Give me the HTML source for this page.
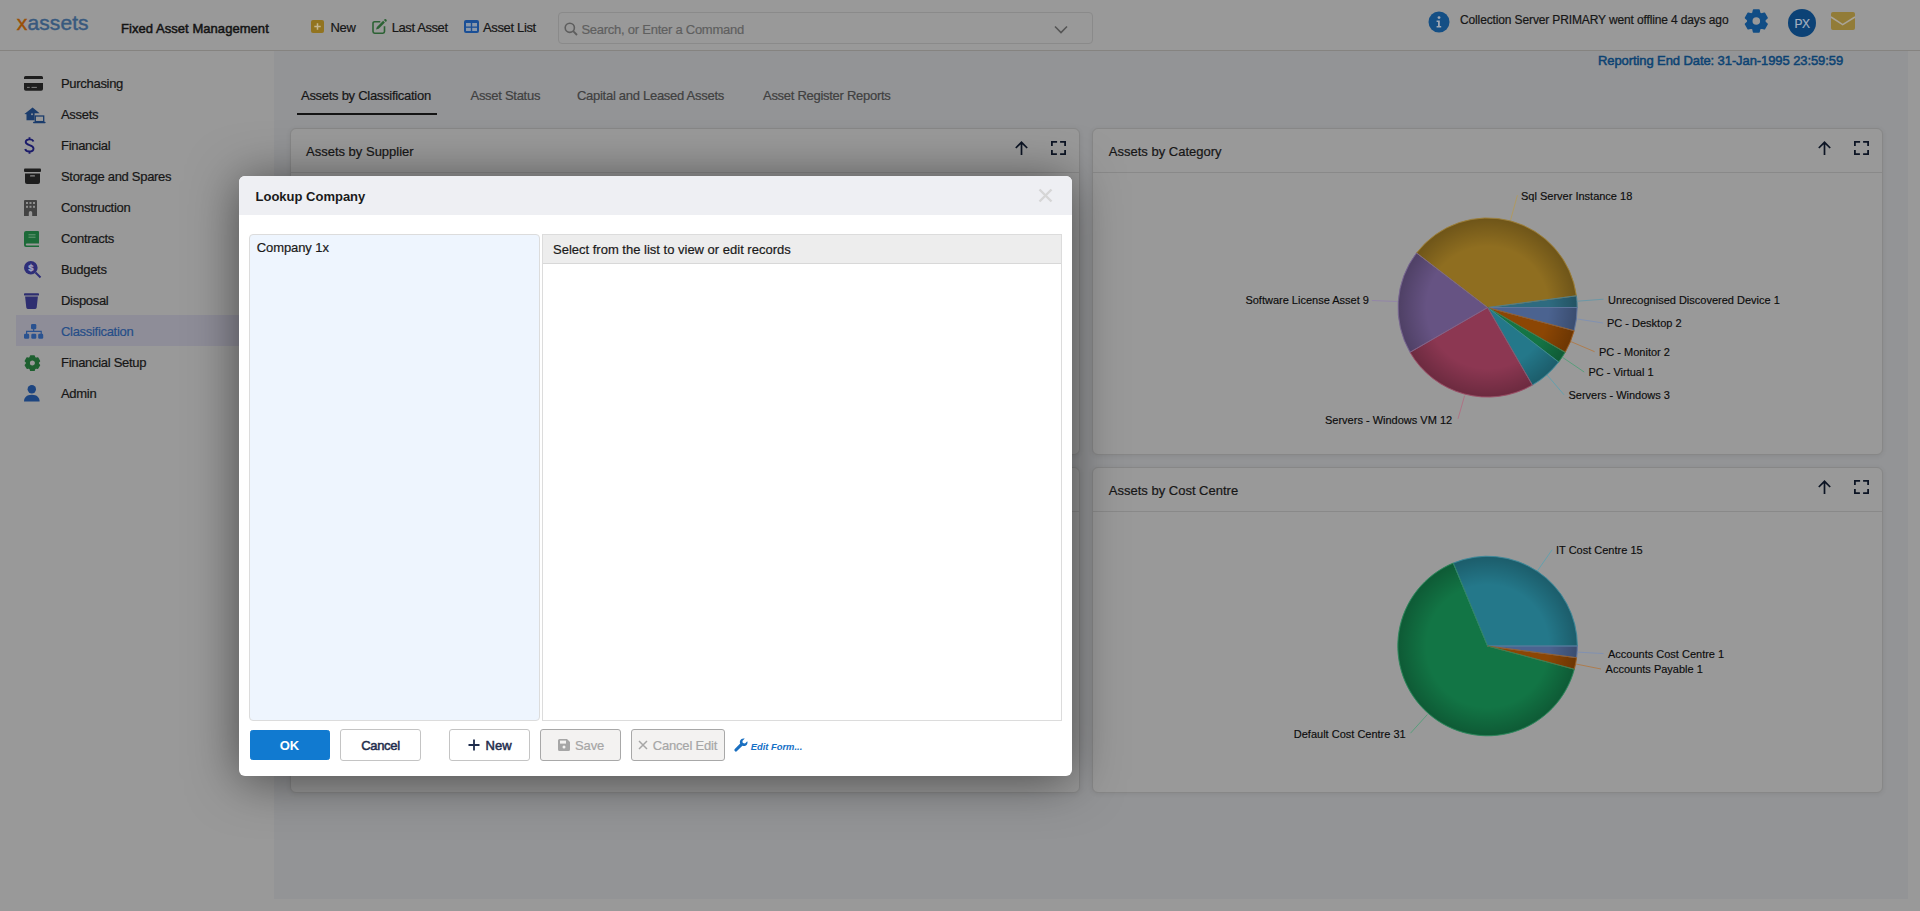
<!DOCTYPE html>
<html><head><meta charset="utf-8"><title>xassets</title>
<style>
*{box-sizing:border-box;margin:0;padding:0}
html,body{width:1920px;height:911px;overflow:hidden;background:#999999;font-family:"Liberation Sans",sans-serif;color:#161616}
.a{position:absolute}
.t{white-space:nowrap;-webkit-text-stroke:0.2px}
svg{position:absolute;overflow:visible}
.card{position:absolute;background:#999999;border:1px solid #878787;border-radius:6px;box-shadow:0 1px 5px rgba(0,0,0,.08)}
.card .hd{position:absolute;left:0;right:0;top:0;height:44px;border-bottom:1px solid #898989}
.btn{position:absolute;top:729px;height:32px;border:1px solid #c4c4c4;border-radius:3px;background:#fff}
</style></head><body>
<div class="a" style="left:0;top:0;width:1920px;height:50px;background:#999999"></div>
<div class="a" style="left:0;top:50px;width:1920px;height:1px;background:#858380"></div>
<div class="a t" style="left:16.8px;top:12px;font-size:21px;line-height:21px;letter-spacing:0.1px;-webkit-text-stroke:0.45px"><span style="color:#9a5006;-webkit-text-stroke-color:#9a5006">x</span><span style="color:#38597e;-webkit-text-stroke-color:#38597e">assets</span></div>
<div class="a t" style="left:121px;top:22px;font-size:13px;line-height:13px;color:#141414;letter-spacing:0.05px;-webkit-text-stroke:0.5px;">Fixed Asset Management</div>
<div class="a" style="left:311px;top:20px;width:13px;height:13px;background:#927420;border-radius:2px"></div><svg style="left:311px;top:20px" width="13" height="13"><path d="M6.5 3.3v6.4M3.3 6.5h6.4" stroke="#c4b690" stroke-width="1.5"/></svg>
<div class="a t" style="left:330.5px;top:21.1px;font-size:13px;line-height:13px;color:#161616;letter-spacing:-0.3px;">New</div>
<svg style="left:372px;top:19px" width="16" height="15" viewBox="0 0 16 15"><path d="M8.3 2.7H2.6A1.6 1.6 0 0 0 1 4.3v8.3a1.6 1.6 0 0 0 1.6 1.6h8.3a1.6 1.6 0 0 0 1.6-1.6V7.3" fill="none" stroke="#2c6234" stroke-width="1.6"/><path d="M4 10.6l0.9-2.6 6.2-6.2 1.8 1.8-6.2 6.2z" fill="#2c6234"/><path d="M11.9 1l0.7-0.7a1 1 0 0 1 1.4 0l0.5 0.5a1 1 0 0 1 0 1.4l-0.7 0.7z" fill="#2c6234"/></svg>
<div class="a t" style="left:391.7px;top:21.1px;font-size:13px;line-height:13px;color:#161616;letter-spacing:-0.4px;">Last Asset</div>
<svg style="left:464px;top:20px" width="15" height="13" viewBox="0 0 15 13"><rect x="0" y="0" width="15" height="13" rx="2" fill="#1a4f96"/><rect x="2" y="3" width="4.8" height="3.5" fill="#8a98aa"/><rect x="8.2" y="3" width="4.8" height="3.5" fill="#8a98aa"/><rect x="2" y="7.8" width="4.8" height="3.2" fill="#8a98aa"/><rect x="8.2" y="7.8" width="4.8" height="3.2" fill="#8a98aa"/></svg>
<div class="a t" style="left:483px;top:21.1px;font-size:13px;line-height:13px;color:#161616;letter-spacing:-0.35px;">Asset List</div>
<div class="a" style="left:558px;top:12px;width:535px;height:32px;border:1px solid #8a8a8a;border-radius:4px"></div>
<svg style="left:564px;top:22px" width="14" height="14" viewBox="0 0 14 14"><circle cx="5.8" cy="5.8" r="4.6" fill="none" stroke="#5e5e5e" stroke-width="1.6"/><path d="M9.2 9.2l3.8 3.8" stroke="#5e5e5e" stroke-width="1.8"/></svg>
<div class="a t" style="left:581.4px;top:22.9px;font-size:13px;line-height:13px;color:#5f5f5f;letter-spacing:-0.25px;">Search, or Enter a Command</div>
<svg style="left:1054px;top:25px" width="14" height="9" viewBox="0 0 14 9"><path d="M1 1.5l6 6 6-6" fill="none" stroke="#555" stroke-width="1.6"/></svg>
<svg style="left:1428px;top:11px" width="22" height="22" viewBox="0 0 22 22"><circle cx="11" cy="11" r="10.5" fill="#144f85"/><circle cx="11" cy="6.6" r="1.4" fill="#a0a8b4"/><path d="M8.6 9.4h3.2v5.6h1.4v1.6H8.6V15h1.4v-4H8.6z" fill="#a0a8b4"/></svg>
<div class="a t" style="left:1460px;top:13.59px;font-size:12px;line-height:12px;color:#161616;letter-spacing:-0.13px;">Collection Server PRIMARY went offline 4 days ago</div>
<svg style="left:0;top:0" width="1920" height="50"><path d="M1752.94 13.08 L1753.59 10.13 L1759.01 10.13 L1759.66 13.08 L1761.48 14.13 L1764.36 13.22 L1767.07 17.91 L1764.84 19.95 L1764.84 22.05 L1767.07 24.09 L1764.36 28.78 L1761.48 27.87 L1759.66 28.92 L1759.01 31.87 L1753.59 31.87 L1752.94 28.92 L1751.12 27.87 L1748.24 28.78 L1745.53 24.09 L1747.76 22.05 L1747.76 19.95 L1745.53 17.91 L1748.24 13.22 L1751.12 14.13ZM1760.9 21A4.6 4.6 0 1 0 1751.7 21A4.6 4.6 0 1 0 1760.9 21Z" fill="#114d85" fill-rule="evenodd" stroke="#114d85" stroke-width="1.6" stroke-linejoin="round"/></svg>
<div class="a" style="left:1788px;top:9px;width:28px;height:28px;border-radius:50%;background:#0c4276"></div><div class="a t" style="left:1788px;top:17.5px;width:28px;text-align:center;font-size:12px;line-height:12px;color:#a4b0bf;letter-spacing:-0.6px">PX</div>
<svg style="left:1831px;top:12px" width="24" height="18" viewBox="0 0 24 18"><rect x="0" y="0" width="24" height="18" rx="2" fill="#927c38"/><path d="M0 5l11.7 7.6L24 5" fill="none" stroke="#aaa498" stroke-width="1.5"/></svg>
<div class="a" style="left:16px;top:315px;width:258px;height:31px;background:#8e8d98"></div>
<div class="a t" style="left:61px;top:76.6px;font-size:13px;line-height:13px;color:#161616;letter-spacing:-0.3px;">Purchasing</div>
<div class="a t" style="left:61px;top:107.6px;font-size:13px;line-height:13px;color:#161616;letter-spacing:-0.3px;">Assets</div>
<div class="a t" style="left:61px;top:138.6px;font-size:13px;line-height:13px;color:#161616;letter-spacing:-0.3px;">Financial</div>
<div class="a t" style="left:61px;top:169.6px;font-size:13px;line-height:13px;color:#161616;letter-spacing:-0.3px;">Storage and Spares</div>
<div class="a t" style="left:61px;top:200.6px;font-size:13px;line-height:13px;color:#161616;letter-spacing:-0.3px;">Construction</div>
<div class="a t" style="left:61px;top:231.6px;font-size:13px;line-height:13px;color:#161616;letter-spacing:-0.3px;">Contracts</div>
<div class="a t" style="left:61px;top:262.6px;font-size:13px;line-height:13px;color:#161616;letter-spacing:-0.3px;">Budgets</div>
<div class="a t" style="left:61px;top:293.6px;font-size:13px;line-height:13px;color:#161616;letter-spacing:-0.3px;">Disposal</div>
<div class="a t" style="left:61px;top:324.6px;font-size:13px;line-height:13px;color:#264e88;letter-spacing:-0.3px;">Classification</div>
<div class="a t" style="left:61px;top:355.6px;font-size:13px;line-height:13px;color:#161616;letter-spacing:-0.3px;">Financial Setup</div>
<div class="a t" style="left:61px;top:386.6px;font-size:13px;line-height:13px;color:#161616;letter-spacing:-0.3px;">Admin</div>
<svg style="left:24px;top:76px" width="19" height="15" viewBox="0 0 19 15"><path d="M1.5 0h16A1.5 1.5 0 0 1 19 1.5V3H0V1.5A1.5 1.5 0 0 1 1.5 0z" fill="#1e1e1e"/><path d="M0 6.9h19V13a1.8 1.8 0 0 1-1.8 1.8H1.8A1.8 1.8 0 0 1 0 13z" fill="#1e1e1e"/><path d="M3 11.4h2.7M7.5 11.4h5.4" stroke="#8a8a8a" stroke-width="0.9"/></svg>
<svg style="left:23.5px;top:106.5px" width="22" height="17" viewBox="0 0 22 17"><path d="M0.4 7L8.6 0.5 15.6 6.3H10.6V13.2H2.5V7.3z" fill="#1b3c6c"/><circle cx="8" cy="7.3" r="1" fill="#8a8f98"/><rect x="11.3" y="9" width="8.4" height="5.6" fill="none" stroke="#1b3c6c" stroke-width="1.3"/><rect x="9" y="14.7" width="12.6" height="1.6" rx="0.7" fill="#1b3c6c"/></svg>
<svg style="left:24px;top:137px" width="11" height="17" viewBox="0 0 11 17"><path d="M9.4 4.6C9 3 7.6 2.4 5.5 2.4 3.2 2.4 1.7 3.4 1.7 5.1c0 3.8 7.8 2.2 7.8 6.4 0 1.9-1.7 3-4 3-2.3 0-3.8-.8-4.3-2.6M5.5 0.3v2.1M5.5 14.5v2.2" fill="none" stroke="#1b1b6a" stroke-width="1.9"/></svg>
<svg style="left:24px;top:168px" width="17" height="16" viewBox="0 0 17 16"><rect x="0" y="0.5" width="17" height="3.5" rx="1" fill="#1e1e1e"/><path d="M1 5.4h15V14a2 2 0 0 1-2 2H3a2 2 0 0 1-2-2z" fill="#1e1e1e"/><rect x="6" y="7.2" width="5" height="1.4" rx=".6" fill="#8a8a8a"/></svg>
<svg style="left:24px;top:200px" width="13" height="16" viewBox="0 0 13 16"><path d="M0 1a1 1 0 0 1 1-1h11a1 1 0 0 1 1 1v15H8.2v-3.2a1.7 1.7 0 0 0-3.4 0V16H0z" fill="#434343"/><g fill="#8f8f8f"><rect x="2" y="2" width="2" height="2"/><rect x="5.5" y="2" width="2" height="2"/><rect x="9" y="2" width="2" height="2"/><rect x="2" y="5.8" width="2" height="2"/><rect x="5.5" y="5.8" width="2" height="2"/><rect x="9" y="5.8" width="2" height="2"/></g></svg>
<svg style="left:24px;top:231px" width="16" height="16" viewBox="0 0 16 16"><path d="M2 0h12a1 1 0 0 1 1 1v11.5H2.8a1 1 0 0 0 0 2H15V16H2a2 2 0 0 1-2-2V2a2 2 0 0 1 2-2z" fill="#1c6a38"/><path d="M4.5 3.8h7M4.5 6.2h7" stroke="#6a9a78" stroke-width="1"/></svg>
<svg style="left:24px;top:261px" width="18" height="17" viewBox="0 0 18 17"><circle cx="6.8" cy="6.8" r="6.8" fill="#2e2e78"/><path d="M11.5 11.5l5 5" stroke="#2e2e78" stroke-width="2"/><text x="6.8" y="10.3" font-size="9.5" font-weight="700" text-anchor="middle" fill="#a4a4c0" stroke="#a4a4c0" stroke-width="0.3" font-family="Liberation Sans">$</text></svg>
<svg style="left:24px;top:292px" width="15" height="17" viewBox="0 0 15 17"><rect x="0" y="1.2" width="15" height="2.4" rx=".9" fill="#2e2e70"/><path d="M1.1 4.6h12.8l-1.2 11a1.5 1.5 0 0 1-1.5 1.3H3.8a1.5 1.5 0 0 1-1.5-1.3z" fill="#2e2e70"/></svg>
<svg style="left:23.9px;top:324px" width="20" height="15" viewBox="0 0 20 15"><rect x="7" y="0" width="5.3" height="5.2" rx="1.3" fill="#2a5290"/><path d="M9.65 5v2.5M2.6 10V7.4h14.6V10" fill="none" stroke="#2a5290" stroke-width="1.2"/><rect x="0" y="9.8" width="5.2" height="5" rx="1.2" fill="#2a5290"/><rect x="7.3" y="9.8" width="5" height="5" rx="1.2" fill="#2a5290"/><rect x="14.2" y="9.8" width="5" height="5" rx="1.2" fill="#2a5290"/></svg>
<svg style="left:0;top:0" width="60" height="420"><path d="M30.09 357.67 L30.61 355.92 L34.19 355.92 L34.71 357.67 L35.95 358.39 L37.72 357.96 L39.51 361.06 L38.26 362.38 L38.26 363.82 L39.51 365.14 L37.72 368.24 L35.95 367.81 L34.71 368.53 L34.19 370.28 L30.61 370.28 L30.09 368.53 L28.85 367.81 L27.08 368.24 L25.29 365.14 L26.54 363.82 L26.54 362.38 L25.29 361.06 L27.08 357.96 L28.85 358.39ZM35.6 363.1A3.2 3.2 0 1 0 29.2 363.1A3.2 3.2 0 1 0 35.6 363.1Z" fill="#1e6030" fill-rule="evenodd" stroke="#1e6030" stroke-width="1.4" stroke-linejoin="round"/></svg>
<svg style="left:24px;top:385px" width="16" height="17" viewBox="0 0 16 17"><circle cx="7.8" cy="4.2" r="4.2" fill="#1d4580"/><path d="M0 16.5c0-4 2.5-6.8 7.8-6.8s7.8 2.8 7.8 6.8z" fill="#1d4580"/></svg>
<div class="a" style="left:274px;top:51px;width:1634px;height:848px;background:#939496"></div>
<div class="a t" style="left:1598px;top:54.2px;font-size:13px;line-height:13px;color:#0c4373;letter-spacing:-0.09px;-webkit-text-stroke:0.5px;">Reporting End Date: 31-Jan-1995 23:59:59</div>
<div class="a t" style="left:301px;top:89px;font-size:13px;line-height:13px;color:#161616;letter-spacing:-0.28px;">Assets by Classification</div>
<div class="a t" style="left:470.5px;top:89px;font-size:13px;line-height:13px;color:#404040;letter-spacing:-0.28px;">Asset Status</div>
<div class="a t" style="left:577px;top:89px;font-size:13px;line-height:13px;color:#404040;letter-spacing:-0.28px;">Capital and Leased Assets</div>
<div class="a t" style="left:763px;top:89px;font-size:13px;line-height:13px;color:#404040;letter-spacing:-0.28px;">Asset Register Reports</div>
<div class="a" style="left:297px;top:112.5px;width:140px;height:2.5px;background:#141414"></div>
<div class="card" style="left:290px;top:128px;width:790px;height:326.5px"><div class="hd"></div></div>
<div class="a t" style="left:306px;top:144.5px;font-size:13px;line-height:13px;color:#161616;">Assets by Supplier</div>
<svg style="left:1015px;top:141px" width="13" height="14" viewBox="0 0 13 14"><path d="M6.5 14V1.3M0.8 7l5.7-5.7L12.2 7" fill="none" stroke="#0c1424" stroke-width="1.7"/></svg><svg style="left:1051px;top:141px" width="15" height="14" viewBox="0 0 15 14"><path d="M0.9 5V0.9h5.2M9.1 0.9h5v4.1M14.1 9v4.1h-5M5.9 13.1H0.9V9" fill="none" stroke="#0c1424" stroke-width="1.8"/></svg>
<div class="card" style="left:1092px;top:128px;width:791px;height:326.5px"><div class="hd"></div></div>
<div class="a t" style="left:1108.8px;top:144.5px;font-size:13px;line-height:13px;color:#161616;">Assets by Category</div>
<svg style="left:1818px;top:141px" width="13" height="14" viewBox="0 0 13 14"><path d="M6.5 14V1.3M0.8 7l5.7-5.7L12.2 7" fill="none" stroke="#0c1424" stroke-width="1.7"/></svg><svg style="left:1854px;top:141px" width="15" height="14" viewBox="0 0 15 14"><path d="M0.9 5V0.9h5.2M9.1 0.9h5v4.1M14.1 9v4.1h-5M5.9 13.1H0.9V9" fill="none" stroke="#0c1424" stroke-width="1.8"/></svg>
<div class="card" style="left:290px;top:467px;width:790px;height:325.5px"><div class="hd"></div></div>
<svg style="left:1015px;top:479.5px" width="13" height="14" viewBox="0 0 13 14"><path d="M6.5 14V1.3M0.8 7l5.7-5.7L12.2 7" fill="none" stroke="#0c1424" stroke-width="1.7"/></svg><svg style="left:1051px;top:479.5px" width="15" height="14" viewBox="0 0 15 14"><path d="M0.9 5V0.9h5.2M9.1 0.9h5v4.1M14.1 9v4.1h-5M5.9 13.1H0.9V9" fill="none" stroke="#0c1424" stroke-width="1.8"/></svg>
<div class="card" style="left:1092px;top:467px;width:791px;height:325.5px"><div class="hd"></div></div>
<div class="a t" style="left:1108.8px;top:483.8px;font-size:13px;line-height:13px;color:#161616;">Assets by Cost Centre</div>
<svg style="left:1818px;top:479.5px" width="13" height="14" viewBox="0 0 13 14"><path d="M6.5 14V1.3M0.8 7l5.7-5.7L12.2 7" fill="none" stroke="#0c1424" stroke-width="1.7"/></svg><svg style="left:1854px;top:479.5px" width="15" height="14" viewBox="0 0 15 14"><path d="M0.9 5V0.9h5.2M9.1 0.9h5v4.1M14.1 9v4.1h-5M5.9 13.1H0.9V9" fill="none" stroke="#0c1424" stroke-width="1.8"/></svg>
<svg style="left:0;top:0" width="1920" height="911"><defs><radialGradient id="g1"><stop offset="0" stop-color="#000" stop-opacity="0"/><stop offset="0.68" stop-color="#000" stop-opacity="0"/><stop offset="0.985" stop-color="#000" stop-opacity="0.22"/><stop offset="1" stop-color="#000" stop-opacity="0.08"/></radialGradient><radialGradient id="g2"><stop offset="0" stop-color="#000" stop-opacity="0"/><stop offset="0.68" stop-color="#000" stop-opacity="0"/><stop offset="0.985" stop-color="#000" stop-opacity="0.22"/><stop offset="1" stop-color="#000" stop-opacity="0.08"/></radialGradient></defs><path d="M1487.6 307.5L1416.52 252.95A89.6 89.6 0 0 1 1576.43 295.8Z" fill="#8f6e20"/><path d="M1487.6 307.5L1576.43 295.8A89.6 89.6 0 0 1 1577.2 307.5Z" fill="#2e6b80"/><path d="M1487.6 307.5L1577.2 307.5A89.6 89.6 0 0 1 1574.15 330.69Z" fill="#4b6390"/><path d="M1487.6 307.5L1574.15 330.69A89.6 89.6 0 0 1 1565.2 352.3Z" fill="#8c4604"/><path d="M1487.6 307.5L1565.2 352.3A89.6 89.6 0 0 1 1558.68 362.05Z" fill="#147545"/><path d="M1487.6 307.5L1558.68 362.05A89.6 89.6 0 0 1 1532.4 385.1Z" fill="#24788a"/><path d="M1487.6 307.5L1532.4 385.1A89.6 89.6 0 0 1 1410 352.3Z" fill="#8c3752"/><path d="M1487.6 307.5L1410 352.3A89.6 89.6 0 0 1 1416.52 252.95Z" fill="#665383"/><circle cx="1487.6" cy="307.5" r="89.6" fill="url(#g1)"/><path d="M1487.6 307.5L1416.52 252.95A89.6 89.6 0 0 1 1576.43 295.8Z" fill="none" stroke="#9c7f3a" stroke-width="0.9" stroke-linejoin="round"/><path d="M1487.6 307.5L1576.43 295.8A89.6 89.6 0 0 1 1577.2 307.5Z" fill="none" stroke="#477c8f" stroke-width="0.9" stroke-linejoin="round"/><path d="M1487.6 307.5L1577.2 307.5A89.6 89.6 0 0 1 1574.15 330.69Z" fill="none" stroke="#60759d" stroke-width="0.9" stroke-linejoin="round"/><path d="M1487.6 307.5L1574.15 330.69A89.6 89.6 0 0 1 1565.2 352.3Z" fill="none" stroke="#995c22" stroke-width="0.9" stroke-linejoin="round"/><path d="M1487.6 307.5L1565.2 352.3A89.6 89.6 0 0 1 1558.68 362.05Z" fill="none" stroke="#30855b" stroke-width="0.9" stroke-linejoin="round"/><path d="M1487.6 307.5L1558.68 362.05A89.6 89.6 0 0 1 1532.4 385.1Z" fill="none" stroke="#3e8898" stroke-width="0.9" stroke-linejoin="round"/><path d="M1487.6 307.5L1532.4 385.1A89.6 89.6 0 0 1 1410 352.3Z" fill="none" stroke="#994f66" stroke-width="0.9" stroke-linejoin="round"/><path d="M1487.6 307.5L1410 352.3A89.6 89.6 0 0 1 1416.52 252.95Z" fill="none" stroke="#786791" stroke-width="0.9" stroke-linejoin="round"/><path d="M1517.4 195.2L1510.6 219.9" stroke="#b09962" stroke-width="1" fill="none"/><path d="M1371.9 300.5L1396.9 301.5" stroke="#9386a8" stroke-width="1" fill="none"/><path d="M1577.4 301.2L1603.5 299.2" stroke="#6c97a6" stroke-width="1" fill="none"/><path d="M1577.4 319L1603 323" stroke="#8191b1" stroke-width="1" fill="none"/><path d="M1570.9 341.6L1594.6 351.7" stroke="#ae7d4f" stroke-width="1" fill="none"/><path d="M1562 357L1584.2 372" stroke="#5a9e7c" stroke-width="1" fill="none"/><path d="M1547 374.9L1564 394.8" stroke="#65a0ad" stroke-width="1" fill="none"/><path d="M1464.6 395.7L1458 418.8" stroke="#ae7385" stroke-width="1" fill="none"/><text x="1521" y="199.7" font-family="Liberation Sans" font-size="11" fill="#0c0c0c" stroke="#0c0c0c" stroke-width="0.15">Sql Server Instance 18</text><text x="1245.4" y="304.2" font-family="Liberation Sans" font-size="11" fill="#0c0c0c" stroke="#0c0c0c" stroke-width="0.15">Software License Asset 9</text><text x="1608" y="303.7" font-family="Liberation Sans" font-size="11" fill="#0c0c0c" stroke="#0c0c0c" stroke-width="0.15">Unrecognised Discovered Device 1</text><text x="1607" y="327" font-family="Liberation Sans" font-size="11" fill="#0c0c0c" stroke="#0c0c0c" stroke-width="0.15">PC - Desktop 2</text><text x="1599" y="355.7" font-family="Liberation Sans" font-size="11" fill="#0c0c0c" stroke="#0c0c0c" stroke-width="0.15">PC - Monitor 2</text><text x="1588.4" y="376" font-family="Liberation Sans" font-size="11" fill="#0c0c0c" stroke="#0c0c0c" stroke-width="0.15">PC - Virtual 1</text><text x="1568.5" y="399" font-family="Liberation Sans" font-size="11" fill="#0c0c0c" stroke="#0c0c0c" stroke-width="0.15">Servers - Windows 3</text><text x="1325" y="424" font-family="Liberation Sans" font-size="11" fill="#0c0c0c" stroke="#0c0c0c" stroke-width="0.15">Servers - Windows VM 12</text><path d="M1487.6 646L1453.24 563.04A89.8 89.8 0 0 1 1577.4 646Z" fill="#24788a"/><path d="M1487.6 646L1577.4 646A89.8 89.8 0 0 1 1576.63 657.72Z" fill="#4b6390"/><path d="M1487.6 646L1576.63 657.72A89.8 89.8 0 0 1 1574.34 669.24Z" fill="#8c4604"/><path d="M1487.6 646L1574.34 669.24A89.8 89.8 0 1 1 1453.24 563.04Z" fill="#127545"/><circle cx="1487.6" cy="646" r="89.8" fill="url(#g2)"/><path d="M1487.6 646L1453.24 563.04A89.8 89.8 0 0 1 1577.4 646Z" fill="none" stroke="#3e8898" stroke-width="0.9" stroke-linejoin="round"/><path d="M1487.6 646L1577.4 646A89.8 89.8 0 0 1 1576.63 657.72Z" fill="none" stroke="#60759d" stroke-width="0.9" stroke-linejoin="round"/><path d="M1487.6 646L1576.63 657.72A89.8 89.8 0 0 1 1574.34 669.24Z" fill="none" stroke="#995c22" stroke-width="0.9" stroke-linejoin="round"/><path d="M1487.6 646L1574.34 669.24A89.8 89.8 0 1 1 1453.24 563.04Z" fill="none" stroke="#2e855b" stroke-width="0.9" stroke-linejoin="round"/><path d="M1537.3 571L1552.2 549.7" stroke="#65a0ad" stroke-width="1" fill="none"/><path d="M1577.5 652.1L1603.5 653.6" stroke="#8191b1" stroke-width="1" fill="none"/><path d="M1575.9 664L1601 669" stroke="#ae7d4f" stroke-width="1" fill="none"/><path d="M1427.4 714.5L1410.5 733.2" stroke="#599e7c" stroke-width="1" fill="none"/><text x="1556" y="553.7" font-family="Liberation Sans" font-size="11" fill="#0c0c0c" stroke="#0c0c0c" stroke-width="0.15">IT Cost Centre 15</text><text x="1608" y="657.6" font-family="Liberation Sans" font-size="11" fill="#0c0c0c" stroke="#0c0c0c" stroke-width="0.15">Accounts Cost Centre 1</text><text x="1605.6" y="673" font-family="Liberation Sans" font-size="11" fill="#0c0c0c" stroke="#0c0c0c" stroke-width="0.15">Accounts Payable 1</text><text x="1293.8" y="737.8" font-family="Liberation Sans" font-size="11" fill="#0c0c0c" stroke="#0c0c0c" stroke-width="0.15">Default Cost Centre 31</text></svg>
<div class="a" style="left:239px;top:176px;width:833px;height:600px;background:#fff;border-radius:6px;box-shadow:0 4px 50px rgba(0,0,0,.52);overflow:hidden"><div class="a" style="left:0;top:0;width:833px;height:39px;background:#eeeff3"></div></div>
<div class="a t" style="left:255.5px;top:189.7px;font-size:13px;line-height:13px;color:#1a1a1a;font-weight:700;-webkit-text-stroke:0;">Lookup Company</div>
<svg style="left:1038px;top:188px" width="15" height="15" viewBox="0 0 15 15"><path d="M1.5 1.5l12 12M13.5 1.5l-12 12" stroke="#d6d6d6" stroke-width="2.4"/></svg>
<div class="a" style="left:249px;top:234px;width:291px;height:487px;background:#eef5fe;border:1px solid #dcdcdc;border-radius:4px"></div>
<div class="a t" style="left:256.8px;top:240.7px;font-size:13px;line-height:13px;color:#1a1a1a;letter-spacing:-0.1px;">Company 1x</div>
<div class="a" style="left:542px;top:234px;width:520px;height:487px;background:#fff;border:1px solid #dcdcdc"></div>
<div class="a" style="left:543px;top:235px;width:518px;height:29px;background:#ededed;border-bottom:1px solid #d8d8d8"></div>
<div class="a t" style="left:553px;top:242.8px;font-size:13px;line-height:13px;color:#1a1a1a;">Select from the list to view or edit records</div>
<div class="btn" style="left:250px;width:79.5px;top:729.5px;height:30.8px;background:#117ad0;border-color:#117ad0;border-radius:2.5px"></div><div class="a t" style="left:250px;top:739px;font-size:13px;line-height:13px;color:#fff;font-weight:700;-webkit-text-stroke:0;width:79px;text-align:center;">OK</div>
<div class="btn" style="left:340px;width:81px"></div><div class="a t" style="left:340px;top:739px;font-size:13px;line-height:13px;color:#1f2d4d;letter-spacing:-0.3px;width:81px;text-align:center;-webkit-text-stroke:0.5px;">Cancel</div>
<div class="btn" style="left:449px;width:81px"></div><svg style="left:468px;top:739px" width="12" height="12" viewBox="0 0 12 12"><path d="M6 0.5v11M0.5 6h11" stroke="#1f2d4d" stroke-width="1.8"/></svg><div class="a t" style="left:485.6px;top:739px;font-size:13px;line-height:13px;color:#1f2d4d;-webkit-text-stroke:0.5px;">New</div>
<div class="btn" style="left:540px;width:81px;background:#f3f2f1;border-color:#a8a8a8"></div><svg style="left:558px;top:739px" width="12" height="12" viewBox="0 0 12 12"><path d="M0 1.5A1.5 1.5 0 0 1 1.5 0H9l3 3v7.5a1.5 1.5 0 0 1-1.5 1.5h-9A1.5 1.5 0 0 1 0 10.5z" fill="#a6a6a6"/><rect x="2" y="1.6" width="6" height="3" fill="#f3f2f1"/><circle cx="6" cy="8" r="1.5" fill="#f3f2f1"/></svg><div class="a t" style="left:575px;top:739px;font-size:13px;line-height:13px;color:#a6a6a6;letter-spacing:-0.1px;">Save</div>
<div class="btn" style="left:631px;width:94px;background:#f3f2f1;border-color:#a8a8a8"></div><svg style="left:638px;top:740px" width="10" height="10" viewBox="0 0 10 10"><path d="M1 1l8 8M9 1l-8 8" stroke="#a6a6a6" stroke-width="1.5"/></svg><div class="a t" style="left:652.8px;top:739px;font-size:13px;line-height:13px;color:#a6a6a6;letter-spacing:-0.2px;">Cancel Edit</div>
<svg style="left:734px;top:738px" width="14" height="14" viewBox="0 0 14 14"><path d="M13.3 3.2l-2.3 2.3-2.2-.4-.4-2.2L10.8.6C9 0 7 .6 6.2 2.4c-.5 1-.4 2.2 0 3.1L.8 10.9a1.5 1.5 0 0 0 2.2 2.2l5.4-5.4c1 .4 2.1.5 3.1 0 1.8-.8 2.4-2.8 1.8-4.5z" fill="#1a6fc0"/></svg><div class="a t" style="left:750.7px;top:742.34px;font-size:9.4px;line-height:9.4px;color:#1570c6;font-weight:700;-webkit-text-stroke:0;font-style:italic;">Edit Form...</div>
</body></html>
